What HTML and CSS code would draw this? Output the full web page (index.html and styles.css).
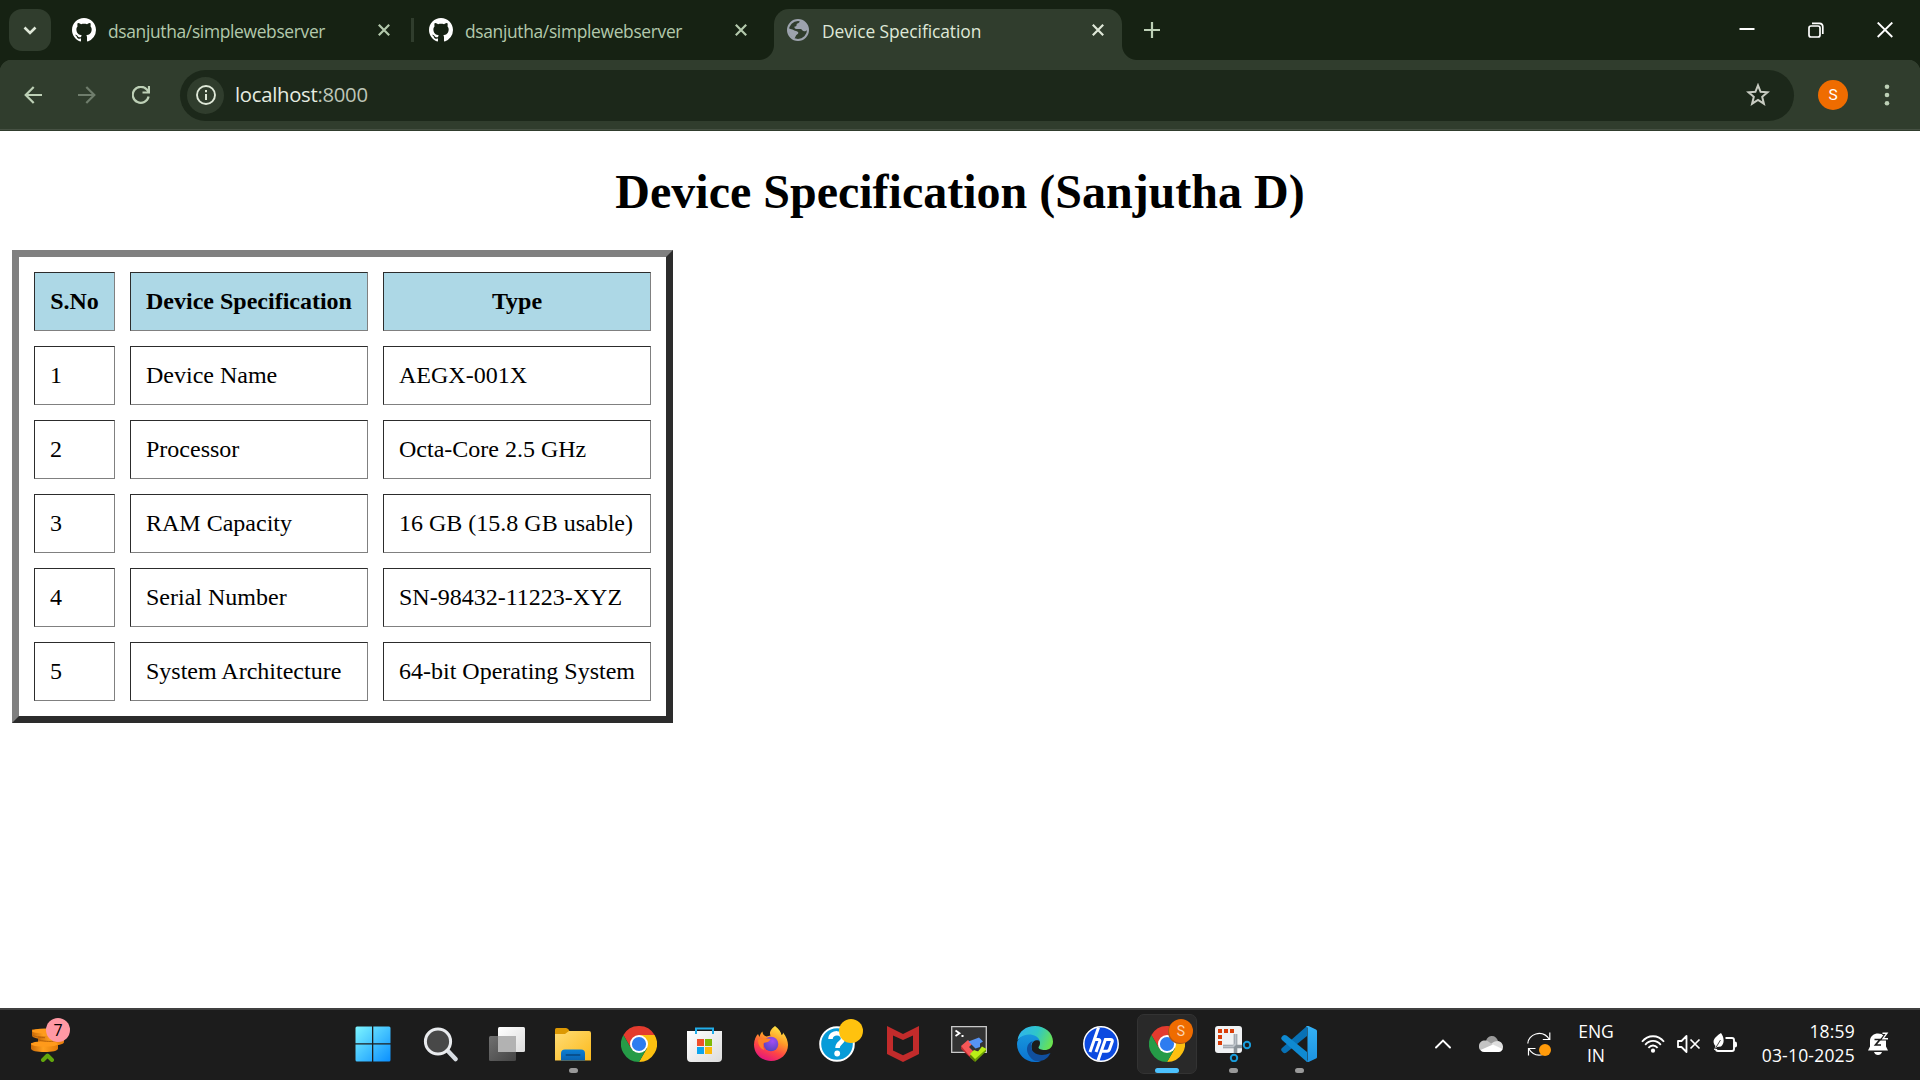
FILE: index.html
```html
<!DOCTYPE html>
<html lang="en">
<head>
<meta charset="utf-8">
<title>Device Specification</title>
<link rel="stylesheet" href="styles.css">
</head>
<body>
<svg class="defs" width="0" height="0" aria-hidden="true">
  <defs>
    <linearGradient id="win" x1="0" y1="0" x2="1" y2="1"><stop offset="0" stop-color="#7df5ff"/><stop offset="1" stop-color="#0a8fff"/></linearGradient>
    <linearGradient id="folder" x1="0" y1="0" x2="1" y2="1"><stop offset="0" stop-color="#ffdc75"/><stop offset="1" stop-color="#fcba1c"/></linearGradient>
    <linearGradient id="blue" x1="0" y1="0" x2="0" y2="1"><stop offset="0" stop-color="#0b7fd4"/><stop offset="1" stop-color="#0a62b0"/></linearGradient>
    <linearGradient id="paper" x1="0" y1="0" x2="1" y2="1"><stop offset="0" stop-color="#fff"/><stop offset="1" stop-color="#dcdcdc"/></linearGradient>
    <linearGradient id="shade" x1="0" y1="0" x2="1" y2="1"><stop offset="0" stop-color="#707070"/><stop offset="1" stop-color="#444"/></linearGradient>
    <linearGradient id="coin" x1="0" y1="0" x2="1" y2="0"><stop offset="0" stop-color="#c96a08"/><stop offset=".45" stop-color="#ff9f1e"/><stop offset="1" stop-color="#e37b0a"/></linearGradient>
    <linearGradient id="fox" x1=".8" y1="0" x2=".35" y2="1"><stop offset="0" stop-color="#fff14a"/><stop offset=".4" stop-color="#ff9a28"/><stop offset=".7" stop-color="#ff4545"/><stop offset="1" stop-color="#e3157f"/></linearGradient>
    <radialGradient id="foxglobe" cx=".6" cy=".3" r=".8"><stop offset="0" stop-color="#a24df5"/><stop offset="1" stop-color="#4f43b8"/></radialGradient>
    <linearGradient id="edgetop" x1="0" y1=".3" x2="1" y2=".6"><stop offset="0" stop-color="#2fb4ee"/><stop offset=".5" stop-color="#2fc6c8"/><stop offset="1" stop-color="#6be34f"/></linearGradient>
    <linearGradient id="edgeleft" x1="0" y1="0" x2="0" y2="1"><stop offset="0" stop-color="#1796dd"/><stop offset="1" stop-color="#0b72d0"/></linearGradient>
    <linearGradient id="vs" x1="0" y1="0" x2="0" y2="1"><stop offset="0" stop-color="#34b1f5"/><stop offset="1" stop-color="#1c93e2"/></linearGradient>
    <symbol id="github" viewBox="0 0 16 16"><path fill="#fff" d="M8 0C3.58 0 0 3.58 0 8c0 3.54 2.29 6.53 5.47 7.59.4.07.55-.17.55-.38 0-.19-.01-.82-.01-1.49-2.01.37-2.53-.49-2.69-.94-.09-.23-.48-.94-.82-1.13-.28-.15-.68-.52-.01-.53.63-.01 1.08.58 1.23.82.72 1.21 1.87.87 2.33.66.07-.52.28-.87.51-1.07-1.78-.2-3.64-.89-3.64-3.95 0-.87.31-1.59.82-2.15-.08-.2-.36-1.02.08-2.12 0 0 .67-.21 2.2.82.64-.18 1.32-.27 2-.27s1.36.09 2 .27c1.53-1.04 2.2-.82 2.2-.82.44 1.1.16 1.92.08 2.12.51.56.82 1.27.82 2.15 0 3.07-1.87 3.75-3.65 3.95.29.25.54.73.54 1.48 0 1.07-.01 1.93-.01 2.2 0 .21.15.46.55.38A8.01 8.01 0 0 0 16 8c0-4.42-3.58-8-8-8z"/></symbol>
    <symbol id="cross" viewBox="0 0 12 12"><path d="M.8.8l10.400 10.400M11.200.8L.8 11.200" fill="none" stroke="currentColor" stroke-width="2.200"/></symbol>
    <symbol id="chrome" viewBox="0 0 36 36">
      <path fill="#e33b2e" d="M18 18L2.410 9A18 18 0 0 1 33.590 9z"/>
      <path fill="#fcc010" d="M18 9H33.590A18 18 0 0 1 18 36L25.800 22.500z"/>
      <path fill="#e33b2e" d="M2.410 9L10.200 22.500 18 18V9z"/>
      <path fill="#259b47" d="M2.410 9L10.200 22.500 18 27 25.800 22.500 18 36A18 18 0 0 1 2.410 9z"/>
      <circle cx="18" cy="18" r="9" fill="#fff"/><circle cx="18" cy="18" r="7.100" fill="#2d7cf0"/>
    </symbol>
  </defs>
</svg>
<div class="screen">
  <header class="tabstrip">
    <button class="tab-search" aria-label="Search tabs"><svg width="14" height="9" viewBox="0 0 14 9"><path d="M1.500 1.500L7 7l5.500-5.500" fill="none" stroke="#dfe8d8" stroke-width="2.600"/></svg></button>
    <div class="tab">
      <svg class="favicon"><use href="#github"/></svg><span class="tab-title">dsanjutha/simplewebserver</span><svg class="tab-close"><use href="#cross"/></svg>
    </div>
    <i class="divider"></i>
    <div class="tab">
      <svg class="favicon"><use href="#github"/></svg><span class="tab-title">dsanjutha/simplewebserver</span><svg class="tab-close"><use href="#cross"/></svg>
    </div>
    <div class="tab tab-active">
      <svg class="globe" viewBox="0 0 22 22"><circle cx="11" cy="11" r="10" fill="none" stroke="#9da3ae" stroke-width="2"/><path fill="#9da3ae" d="M13.500 1.500c-1 .7-.8 2-2 2.500-1.500.5-2 1-2 2.200 0 1-1 1.300-2 1.300-.3 1.500.4 2.500 2 2.500h4c1.500 0 1.500 2 3.500 2.300 2 0 2.500-1 4-1.300C21.500 6 18 2 13.500 1.500zM2 9.500c2.500 1 3 .5 4.500 1.500 2 1.200 3.500 1 4.500 2 .8 1 0 2-1 2.500-1.500.8-1.200 2.300-2.500 4C4 18.500 1 14 2 9.500z"/></svg><span class="tab-title">Device Specification</span><svg class="tab-close"><use href="#cross"/></svg>
    </div>
    <svg class="new-tab" viewBox="0 0 16 16"><path d="M8 0v16M0 8h16" stroke="#bdd0b6" stroke-width="2.200"/></svg>
    <div class="window-buttons">
      <svg viewBox="0 0 16 16"><path d="M.5 7h15" stroke="#fff" stroke-width="2"/></svg>
      <svg viewBox="0 0 16 16"><rect x="1" y="4" width="11" height="11" rx="2" fill="none" stroke="#fff" stroke-width="1.700"/><path d="M4 1.300h7.500a3.500 3.500 0 0 1 3.300 3.500V12" fill="none" stroke="#fff" stroke-width="1.700"/></svg>
      <svg viewBox="0 0 16 16"><path d="M.7.500l14.600 14.500M15.300.5L.7 15" stroke="#fff" stroke-width="1.800"/></svg>
    </div>
  </header>
  <nav class="toolbar">
    <div class="nav-buttons">
      <svg viewBox="0 0 18 18"><path d="M18 9H1.800M9.700 1L1.700 9l8 8" fill="none" stroke="#bdd0b6" stroke-width="2.200"/></svg>
      <svg viewBox="0 0 18 18"><path d="M0 9h16.200M8.300 1l8 8-8 8" fill="none" stroke="#6f7d6c" stroke-width="2.200"/></svg>
      <svg viewBox="0 0 18 18"><path d="M16.600 10.500A8 8 0 1 1 14.800 3.500L16.500 5.500M17 0v6.500h-6.500" fill="none" stroke="#bdd0b6" stroke-width="2.200"/></svg>
    </div>
    <div class="omnibox">
      <span class="site-info"><svg width="20" height="20" viewBox="0 0 20 20"><circle cx="10" cy="10" r="9" fill="none" stroke="#dfe8d8" stroke-width="1.900"/><path d="M10 9v6M10 5v2.200" stroke="#dfe8d8" stroke-width="2"/></svg></span>
      <span class="url">localhost<span class="port">:8000</span></span>
      <svg class="star" viewBox="0 0 24 24"><path d="M12 2.300l2.600 6.500 6.900.5-5.300 4.500 1.700 6.900L12 16.900l-5.900 3.800 1.700-6.900-5.300-4.500 6.900-.5z" fill="none" stroke="#c8ccc2" stroke-width="2"/></svg>
    </div>
    <span class="avatar">S</span>
    <svg class="menu" viewBox="0 0 6 22"><g fill="#bdd0b6"><circle cx="3" cy="2.700" r="2.300"/><circle cx="3" cy="11" r="2.300"/><circle cx="3" cy="19.300" r="2.300"/></g></svg>
  </nav>
  <main class="page">
    <h1>Device Specification (Sanjutha D)</h1>
    <table class="specs">
      <thead><tr><th class="col-no">S.No</th><th class="col-name">Device Specification</th><th class="col-type">Type</th></tr></thead>
      <tbody>
        <tr><td>1</td><td>Device Name</td><td>AEGX-001X</td></tr>
        <tr><td>2</td><td>Processor</td><td>Octa-Core 2.5 GHz</td></tr>
        <tr><td>3</td><td>RAM Capacity</td><td>16 GB (15.8 GB usable)</td></tr>
        <tr><td>4</td><td>Serial Number</td><td>SN-98432-11223-XYZ</td></tr>
        <tr><td>5</td><td>System Architecture</td><td>64-bit Operating System</td></tr>
      </tbody>
    </table>
  </main>
  <footer class="taskbar">
    <div class="widget">
      <svg width="34" height="36" viewBox="0 0 34 36"><g fill="url(#coin)"><path d="M1 3.500v6c0 2 5 3.500 13 3.500s13-1.500 13-3.500v-6z"/><path d="M7 10v6c0 2 5 3.500 13 3.500S33 18 33 16v-6z"/><path d="M0 17v5.500c0 2.500 6 3.500 13.500 3.500S27 25 27 22.500V17z"/></g><ellipse cx="14" cy="5" rx="13" ry="2.600" fill="#ff9a1b"/><ellipse cx="13.500" cy="18" rx="13.500" ry="2.800" fill="#ff9a1b"/><path d="M7 13.500c4 2 12 2.300 18 1.500M1 9c4 2 8 2.600 13 2.700" fill="none" stroke="#b8620a" stroke-width="1"/><path d="M12 34l4.500-4.500L21 34" fill="none" stroke="#62a60c" stroke-width="4" stroke-linecap="round" stroke-linejoin="round"/></svg>
      <span class="badge badge-pink">7</span>
    </div>
    <div class="apps">
      <div class="app app-start"><svg viewBox="0 0 36 36"><path fill="url(#win)" d="M2 .5h15v16.700H.5V2Q.5.500 2 .5zM18.300.5H34q1.500 0 1.500 1.500v15.200H18.300zM.5 18.500H17v17H2Q.5 35.500.5 34zM18.300 18.500h17.200V34q0 1.500-1.500 1.500H18.300z"/></svg></div>
      <div class="app app-search"><svg viewBox="0 0 36 36"><path d="M25.500 24.500l8 8.500" stroke="#d8dde3" stroke-width="4.500" stroke-linecap="round"/><circle cx="16" cy="15.500" r="12.600" fill="#484848" stroke="#e9ebee" stroke-width="3"/></svg></div>
      <div class="app"><svg viewBox="0 0 36 36"><rect x="9" y="1" width="27" height="25" rx="1.500" fill="url(#paper)"/><rect y="10" width="27" height="25" rx="1.500" fill="url(#shade)"/><path d="M9 10h18v16H9z" fill="#b2b2b2"/></svg></div>
      <div class="app running"><svg viewBox="0 0 36 36"><path d="M0 3.500q0-1.500 1.500-1.500H11q1.500 0 2.500 1.500l2 3v4H0z" fill="#dc9803"/><path d="M0 8h10l4-3h20q2 0 2 2v27.500H0z" fill="url(#folder)"/><path d="M6 34.500V27.500q0-4 4-4h16q4 0 4 4v7z" fill="url(#blue)"/><path d="M11.500 29h13" stroke="#07508f" stroke-width="2" stroke-linecap="round"/></svg></div>
      <div class="app"><svg><use href="#chrome"/></svg></div>
      <div class="app"><svg viewBox="0 0 36 36"><path d="M9 8V2.500h17V8" fill="none" stroke="#21aeea" stroke-width="2"/><path d="M0 5h8v3h2V5h15v3h2V5h8v27q0 4-4 4H4q-4 0-4-4z" fill="url(#paper)"/><path d="M10 13h7v7h-7z" fill="#f0502b"/><path d="M18 13h7v7h-7z" fill="#7fba06"/><path d="M10 21h7v7h-7z" fill="#0ba4ee"/><path d="M18 21h7v7h-7z" fill="#fdb80a"/></svg></div>
      <div class="app"><svg viewBox="0 0 36 36"><path d="M22 0c4 3 6 6 6.500 9 1 0 1.600-1 1.500-2.500 3.500 4 5 9 5 12.500C35 28 27.500 35 18 35S1 28 1 18.500C1 14 3 10 5 8l1.500 3c.5-2.500 1.500-4.500 3-5.500 0 2.500 1.500 4.500 4 5l4-1C15.500 6 19 2 22 0z" fill="url(#fox)"/><circle cx="18" cy="18" r="7.300" fill="url(#foxglobe)"/><path d="M5 14c3-2 7-2.500 12.500-1-1 3-4 3.500-7 4-1 3 0 5 1 7-4-1-6.500-5-6.500-10z" fill="#ff8128"/></svg></div>
      <div class="app"><svg viewBox="0 0 36 36"><circle cx="18" cy="18" r="16.800" fill="#079bd8" stroke="#fff" stroke-width="2"/><path d="M11.500 13c0-8 13.500-7 12.500 0-.6 4-5.500 4-5.500 9" fill="none" stroke="#fff" stroke-width="4.500"/><circle cx="18.200" cy="27.500" r="2.900" fill="#fff"/></svg><span class="badge badge-yellow"></span></div>
      <div class="app"><svg viewBox="0 0 36 36"><path d="M2 0l16 8 16-8v28l-16 8-16-8zm6 9.500v15l10 4.800 10-4.800v-15L18 14z" fill="#c22b2b" fill-rule="evenodd"/></svg></div>
      <div class="app"><svg viewBox="0 0 36 36"><path d="M.7.700h34.600v25.600H.7z" fill="#333" stroke="#c9c9c9" stroke-width="1.300"/><path d="M4.500 4.500l4 2.700-4 2.800M10.500 10h2" stroke="#fff" stroke-width="1.800" fill="none"/><path d="M10 20l13 12v3L10 23z" fill="#b52a30"/><path d="M24 32l11-10v3.500L24 36z" fill="#6c9e05"/><path d="M24 36l-5-4.500V28l5 4z" fill="#587f04"/><path d="M10 20l7-6 4 4-3 3 5 5-4.500 4z" fill="#f75757"/><path d="M17.500 15.500L28 11.500l4 4-3 2v3.500l-4.500 1.500z" fill="#5793f2"/><path d="M19 28l4-4 4 1.500 4-5 4.500 2.500L24 33z" fill="#b9ef17"/></svg></div>
      <div class="app"><svg viewBox="0 0 36 36"><path d="M.5 14C2 5 9 0 18 0c10 0 18 7 18 15.500 0 6-4 8.500-8.500 8.500-3 0-6-1-6-2.500 0-1 1.500-1.500 1.500-4.500 0-3-3-6.500-9-7C8 9.500 3 11 .5 14z" fill="url(#edgetop)"/><path d="M0 18C0 12 6 8.500 12 8.500c5 0 10 2.500 11 7-1.500-2-8.500-2-8.500 5.500 0 8 7 14 9.500 14-2 1-4 1-6 1C8 36 0 28 0 18z" fill="url(#edgeleft)"/><path d="M12 17.500C8 22 10 30 17 34.500c3 1.500 9 .5 11.500-1.500 2.500-1.500 4-4 5-6-10 4.500-20 1-19.500-8 .2-1.700 1-3 2-3.700-1.500.2-3 1-4 2.200z" fill="#104f9e"/></svg></div>
      <div class="app"><svg viewBox="0 0 36 36"><circle cx="18" cy="18" r="17.200" fill="#0c4ae0" stroke="#fff" stroke-width="1.500"/><path d="M15.500 1.500L7 26M10.500 13.500H15q2.500 0 1.700 2.300L13 26M15 34.500l7.400-21h5.100q2.500 0 1.700 2.300l-2.700 7.500q-.7 2-2.700 2H19" fill="none" stroke="#fff" stroke-width="3"/></svg></div>
      <div class="app app-current"><svg><use href="#chrome"/></svg><span class="badge badge-orange">S</span></div>
      <div class="app running"><svg viewBox="0 0 36 36"><rect width="27" height="27" rx="3" fill="#f0f2f4"/><path d="M3 5h4M9 5h4M15 5h4M3 11h4M3 17h4" stroke="#da3d08" stroke-width="4"/><path d="M8 20.500h19M20.500 8v19" stroke="#8b939a" stroke-width="3.600"/><path d="M8 20.500h10l2.500-2.500V8" fill="none" stroke="#bcc2c9" stroke-width="2"/><circle cx="32" cy="19" r="3.200" fill="none" stroke="#199cdb" stroke-width="2"/><circle cx="19" cy="32" r="3.200" fill="none" stroke="#199cdb" stroke-width="2"/></svg></div>
      <div class="app running"><svg viewBox="0 0 36 36"><path d="M26 0v10L5.500 26.500Q3.500 28 2 26.500L.7 25Q-.5 23.500 1 22z" fill="#0871b5"/><path d="M1 14Q-.5 12.500.7 11L2 9.500Q3.500 8.500 5.500 9.500L26 26v10z" fill="#0f8ad2"/><path d="M26 0q.5-.3 1.500 0L35 3.500q1 .5 1 1.500v26q0 1-1 1.500L27.500 36Q26 36 25 35q1.500.5 1.500-1V2Q26.500.500 25 1z" fill="url(#vs)"/></svg></div>
    </div>
    <div class="tray">
      <svg class="chevron" viewBox="0 0 16 10"><path d="M1 8.500l7-7 7 7" fill="none" stroke="#fff" stroke-width="1.900" stroke-linecap="round"/></svg>
      <svg class="cloud" viewBox="0 0 24 16"><path d="M7 5C8 1 11 0 13 0c3 0 5 2 6 5l-7 6z" fill="#9a9a9a"/><path d="M4 15.500C0 14 0 12 0 10c0-5 6-7 10-4l9 6z" fill="#c4c4c4"/><path d="M19 5c3 .5 5 3 5 6 0 2-1 3-1 3L12 8c2-2 4-3 7-3z" fill="#dedede"/><path d="M1.500 14L14 8.500 23.500 13c-.5 2-2 3-3.500 3H5c-1.500 0-3-1-3.500-2z" fill="#fff"/></svg>
      <div class="sync"><svg width="24" height="24" viewBox="0 0 24 24"><path d="M.8 11.500C.8 2.500 15-3.500 22.500 7.500M22.800.5v7h-7M1.500 23.500v-7h7M2 17c3 5 8 7 14 5.500" fill="none" stroke="#fff" stroke-width="1.200"/></svg><i class="dot"></i></div>
      <div class="language"><span>ENG</span><span>IN</span></div>
      <svg class="wifi" viewBox="0 0 24 18"><path d="M1 6.700C7-.6 17-.6 23 6.700M4.200 9.800c4.400-5.200 11.200-5.200 15.600 0M7.400 12.900c2.700-3.200 6.500-3.200 9.200 0" fill="none" stroke="#fff" stroke-width="1.800"/><circle cx="12" cy="15.700" r="2.100" fill="#fff"/></svg>
      <svg class="sound" viewBox="0 0 24 18"><path d="M1 6h3.500L9.500 1v16l-5-5H1z" fill="none" stroke="#fff" stroke-width="1.800" stroke-linejoin="round"/><path d="M13.500 4.500l9 9M22.500 4.500l-9 9" stroke="#fff" stroke-width="1.700"/></svg>
      <svg class="battery" viewBox="0 0 24 20"><path d="M12.500 5H19q2 0 2 2v9q0 2-2 2H5q-2 0-2-2M22 9v5" fill="none" stroke="#fff" stroke-width="1.900"/><path d="M22 8.500q2 0 2 2v2q0 2-2 2z" fill="#fff"/><path d="M8 0c3 4 4 10 0 13.500l-4 .5-2 3H1l1.500-4C-2 8 2 4 8 0z" fill="#fff"/><path d="M2 16L7.500 7" stroke="#1c1c1c" stroke-width=".8"/></svg>
      <div class="clock"><span>18:59</span><span>03-10-2025</span></div>
      <svg class="bell" viewBox="0 0 22 24"><path d="M2 9C2 4 6 1.500 10 1.500c5 0 8 3 8 7.500v5.500l2 4H0l2-4zM6 20h8q-1 3-4 3t-4-3z" fill="#fff"/><path d="M14 1h5l-4.500 6H20" fill="none" stroke="#1c1c1c" stroke-width="3.200"/><path d="M14.500 1.200H19l-4 5.500h5" fill="none" stroke="#fff" stroke-width="1.400"/><path d="M6.500 7.500h5.500l-4.500 5.500h5.500" fill="none" stroke="#1c1c1c" stroke-width="1.700"/></svg>
    </div>
  </footer>
</div>
</body>
</html>
```
FILE: styles.css
```css
* { box-sizing: border-box; }
body { margin: 0; overflow: hidden; font-family: "Open Sans", "Noto Sans", sans-serif; }
svg { display: block; flex: none; }
.defs { position: absolute; }
.screen { width: 1920px; height: 1080px; display: flex; flex-direction: column; background: #fff; }

/* Tab strip */
.tabstrip { height: 60px; flex: none; display: flex; align-items: center; padding-left: 9px; background: #162213; color: #b3c9ac; }
.tab-search { width: 42px; height: 42px; margin-right: 9px; padding: 0; border: 0; border-radius: 13px; background: #303d2d; display: flex; align-items: center; justify-content: center; }
.tab { width: 351px; height: 60px; padding: 0 21px 0 12px; display: flex; align-items: center; }
.favicon { width: 24px; height: 24px; margin-right: 12px; }
.tab-title { flex: 1; font-size: 17.400px; letter-spacing: -.33px; line-height: 24px; padding-top: 1px; white-space: nowrap; }
.tab-close { width: 12px; height: 12px; }
.divider { width: 3px; height: 24px; margin-right: 3px; background: #303d2d; }
.tab-active { position: relative; width: 348px; height: 51px; align-self: flex-end; padding: 0 18px 9px 13px; margin-left: 6px; border-radius: 15px 15px 0 0; background: #303d2d; color: #dfe8d8; }
.tab-active .tab-title { letter-spacing: -.07px; }
.tab-active::before, .tab-active::after { content: ""; position: absolute; bottom: 0; width: 15px; height: 15px; }
.tab-active::before { right: 100%; background: radial-gradient(circle at 0 0, transparent 14.500px, #303d2d 15.500px); }
.tab-active::after { left: 100%; background: radial-gradient(circle at 100% 0, transparent 14.500px, #303d2d 15.500px); }
.globe { width: 22px; height: 22px; margin-right: 13px; }
.new-tab { width: 16px; height: 16px; margin-left: 22px; }
.window-buttons { display: flex; gap: 53px; margin-left: auto; padding-right: 27px; }
.window-buttons svg { width: 16px; height: 16px; }

/* Address bar */
.toolbar { height: 71px; flex: none; display: flex; align-items: center; padding: 0 30px 1px 24px; background: linear-gradient(#465143, #465143) 0 69px / 100% 1px no-repeat, radial-gradient(circle at 12px 12px, #303d2d 12px, #162213 12.800px) 0 0 / 12px 12px no-repeat, radial-gradient(circle at 0 12px, #303d2d 12px, #162213 12.800px) 100% 0 / 12px 12px no-repeat, #303d2d; }
.nav-buttons { display: flex; gap: 36px; margin-right: 30px; }
.nav-buttons svg { width: 18px; height: 18px; }
.omnibox { width: 1614px; height: 51px; display: flex; align-items: center; padding: 0 24px 0 7px; border-radius: 26px; background: #1c281a; }
.site-info { width: 37px; height: 37px; border-radius: 50%; background: #303d2d; display: flex; align-items: center; justify-content: center; }
.url { margin-left: 11px; padding-bottom: 2px; flex: 1; font-size: 20.300px; letter-spacing: -.28px; line-height: 28px; color: #e6ece1; }
.port { color: #bdc5b8; }
.star { width: 24px; height: 24px; }
.avatar { width: 30px; height: 30px; margin-left: 24px; border-radius: 50%; background: #ef6c00; color: #fff; font: 15.500px/30px Roboto, sans-serif; text-align: center; }
.menu { width: 6px; height: 22px; margin-left: auto; }

/* Document */
.page { flex: 1; padding: 12px; font-family: "Liberation Serif", "Times New Roman", serif; font-size: 24px; color: #000; }
.page h1 { margin: 21px 0 31px; font-size: 48px; line-height: 55px; text-align: center; }
.specs { border: 7px solid; border-color: #808080 #2c2c2c #2c2c2c #808080; border-spacing: 15px; line-height: 27px; }
.specs th, .specs td { height: 59px; padding: 15px; border: 1px solid; border-color: #2c2c2c #808080 #808080 #2c2c2c; white-space: nowrap; }
.specs th { background: #add8e6; }
.col-no { width: 81px; }
.col-name { width: 238px; }
.col-type { width: 268px; }

/* Taskbar */
.taskbar { height: 72px; flex: none; display: flex; align-items: center; background: #1c1c1c; box-shadow: inset 0 2px #404040; color: #fff; }
.widget { position: relative; width: 342px; padding-left: 31px; }
.badge { position: absolute; width: 24px; height: 24px; border-radius: 50%; text-align: center; }
.badge-pink { left: 46px; top: -8px; background: #ff99a4; color: #000; font-size: 16px; line-height: 24px; }
.badge-yellow { left: 35px; top: 11px; background: #ffc20e; }
.badge-orange { background: #ef6c00; color: #fbd2b0; font: 14px/24px Roboto, sans-serif; box-shadow: -1px 1px #ad5518; }
.apps { display: flex; height: 72px; }
.app { position: relative; width: 66px; display: flex; align-items: center; justify-content: center; }
.app svg { width: 36px; height: 36px; }
.app-start { padding-right: 4px; }
.app-search { padding-right: 2px; }
.running::after { content: ""; position: absolute; left: 29px; bottom: 7px; width: 9px; height: 5px; border-radius: 3px; background: #999; }
.app-current { width: 60px; height: 60px; margin: 6px 3px; border-radius: 7px; background: #292929; border: 1px solid #333; }
.app-current .badge { left: 31px; top: 4px; }
.app-current::after { content: ""; position: absolute; left: 17px; bottom: 0; width: 24px; height: 5px; border-radius: 3px; background: #4cc2ff; }
.tray { display: flex; align-items: center; margin-left: auto; padding-right: 30px; font-size: 17.500px; line-height: 24px; }
.chevron { width: 16px; height: 10px; margin-right: 28px; }
.cloud { width: 24px; height: 16px; margin-right: 24px; }
.sync { position: relative; width: 24px; height: 24px; }
.dot { position: absolute; left: 12px; top: 12px; width: 12px; height: 12px; border-radius: 50%; background: #ff9a0a; }
.language { width: 90px; padding-bottom: 2px; display: flex; flex-direction: column; align-items: center; }
.wifi { width: 24px; height: 18px; margin-right: 12px; }
.sound { width: 24px; height: 18px; margin-right: 12px; }
.battery { width: 24px; height: 20px; margin: -3px 0 0; }
.clock { width: 118px; padding-bottom: 2px; display: flex; flex-direction: column; align-items: flex-end; letter-spacing: .2px; }
.bell { width: 22px; height: 24px; margin-left: 13px; }
```
